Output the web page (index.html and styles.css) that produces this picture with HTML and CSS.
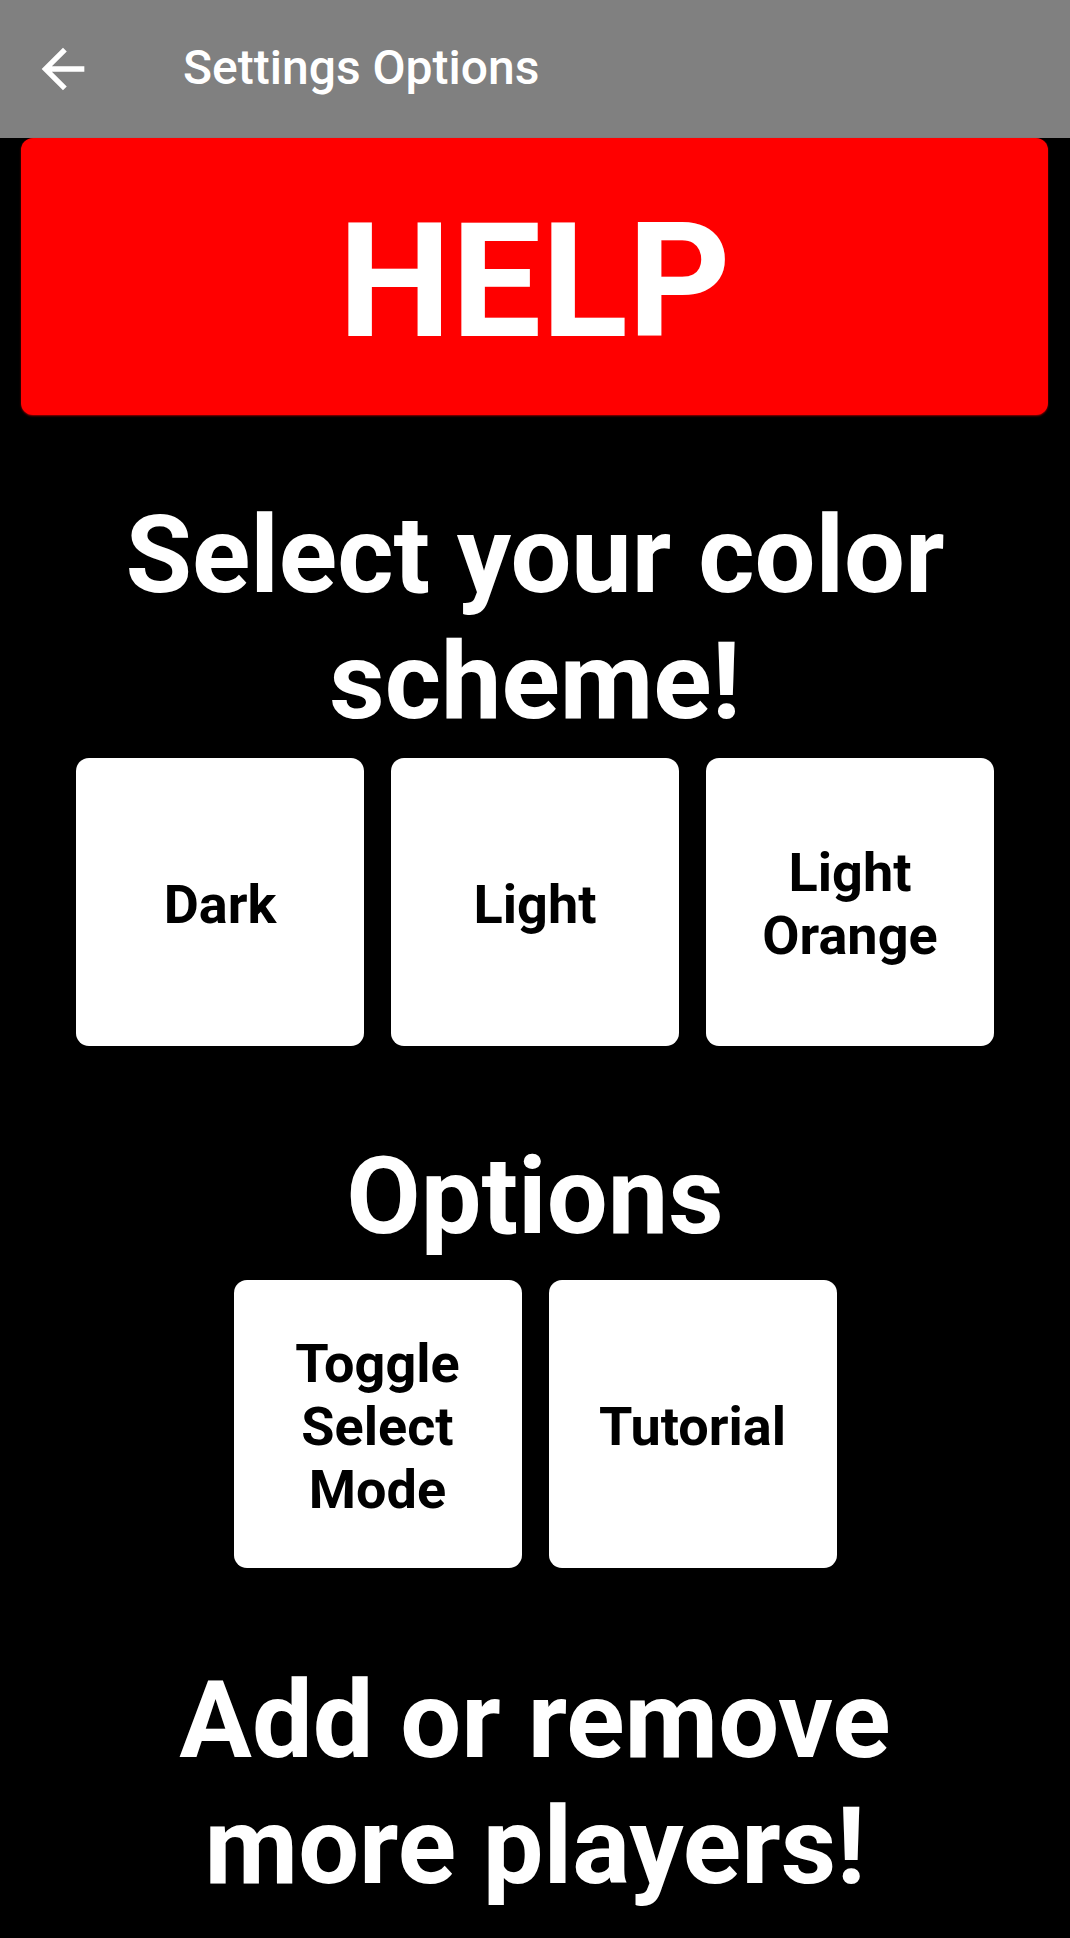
FILE: index.html
```html
<!DOCTYPE html>
<html>
<head>
<meta charset="utf-8">
<link rel="stylesheet" href="styles.css">
</head>
<body>
<header class="toolbar">
  <svg class="back" viewBox="0 0 24 24" aria-hidden="true"><path d="M20 11H7.83l5.59-5.59L12 4l-8 8 8 8 1.41-1.41L7.83 13H20v-2z" fill="#fff"/></svg>
  <span class="title">Settings Options</span>
</header>
<main class="content">
  <div class="help">HELP</div>
  <h2 class="heading heading-scheme">Select your color scheme!</h2>
  <div class="tiles">
    <div class="tile">Dark</div>
    <div class="tile">Light</div>
    <div class="tile">Light<br>Orange</div>
  </div>
  <h2 class="heading heading-options">Options</h2>
  <div class="tiles">
    <div class="tile">Toggle<br>Select<br>Mode</div>
    <div class="tile">Tutorial</div>
  </div>
  <h2 class="heading heading-players">Add or remove more players!</h2>
</main>
</body>
</html>
```
FILE: styles.css
```css
html, body {
  margin: 0;
  padding: 0;
  background: #000;
}
body {
  width: 1070px;
  min-height: 1938px;
  font-family: Roboto, "Noto Sans", sans-serif;
  color: #fff;
  overflow: hidden;
}
.toolbar {
  height: 138px;
  background: #808080;
  display: flex;
  align-items: center;
  padding-left: 31px;
  box-sizing: border-box;
}
.back {
  width: 64px;
  height: 64px;
  flex: none;
}
.title {
  margin-left: 88px;
  font-size: 48px;
  font-weight: 500;
  color: #fff;
  padding-bottom: 4px;
}
.content {
  display: flex;
  flex-direction: column;
  align-items: center;
}
.help {
  align-self: stretch;
  margin: 0 22px 0 21px;
  height: 277px;
  background: #ff0000;
  border-radius: 12px;
  box-shadow: 0 1px 2px rgba(160, 0, 0, 0.9);
  display: flex;
  align-items: center;
  justify-content: center;
  font-size: 160px;
  font-weight: 700;
  color: #fff;
  padding-top: 10px;
  box-sizing: border-box;
}
.heading {
  margin: 0;
  font-size: 108px;
  font-weight: 700;
  line-height: normal;
  text-align: center;
  color: #fff;
}
.heading-scheme {
  margin-top: 77px;
  width: 900px;
}
.heading-options {
  margin-top: 87px;
}
.heading-players {
  margin-top: 89px;
  width: 800px;
}
.tiles {
  display: flex;
  gap: 27px;
  margin-top: 14px;
}
.heading-options + .tiles {
  margin-top: 21px;
}
.tile {
  width: 288px;
  height: 288px;
  background: #fff;
  border-radius: 13px;
  display: flex;
  align-items: center;
  justify-content: center;
  text-align: center;
  color: #000;
  font-size: 54px;
  font-weight: 700;
  line-height: normal;
  padding-top: 4px;
  box-sizing: border-box;
}
```
